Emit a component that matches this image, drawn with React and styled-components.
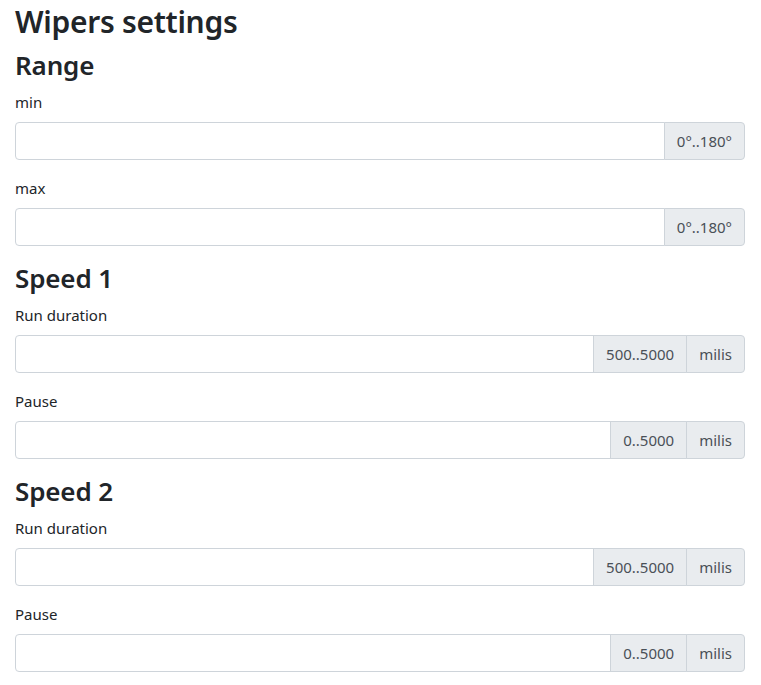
import React from "react";
import styled, { createGlobalStyle } from "styled-components";

const GlobalStyle = createGlobalStyle`
  * {
    box-sizing: border-box;
  }

  body {
    margin: 0;
    background: #fff;
    color: #212529;
    font-family: "Noto Sans", "Open Sans", Arial, sans-serif;
    font-size: 16px;
    line-height: 1.5;
  }
`;

const Page = styled.div`
  padding: 2px 16px 0 15px;
`;

const Title = styled.h2`
  margin: 0 0 8px;
  font-size: 30px;
  font-weight: 600;
  line-height: 39px;
  letter-spacing: -0.3px;
`;

const SectionTitle = styled.h3`
  margin: 0 0 8px;
  font-size: 26px;
  font-weight: 600;
  line-height: 33px;
  letter-spacing: -0.15px;
`;

const FormGroup = styled.div`
  margin-bottom: 16px;
`;

const Label = styled.label`
  display: inline-block;
  margin-bottom: 8px;
  font-size: 15px;
  line-height: 24px;
`;

const InputGroup = styled.div`
  display: flex;
  align-items: stretch;
  width: 100%;
`;

const Input = styled.input`
  flex: 1 1 auto;
  min-width: 0;
  height: 38px;
  padding: 6px 12px;
  font: inherit;
  color: #495057;
  background: #fff;
  border: 1px solid #ced4da;
  border-radius: 4px 0 0 4px;
  outline: none;
`;

const Addon = styled.span`
  display: flex;
  align-items: center;
  padding: 6px 12px;
  margin-left: -1px;
  font-size: 15px;
  color: #495057;
  white-space: nowrap;
  background: #e9ecef;
  border: 1px solid #ced4da;
  border-radius: ${(p) => (p.$last ? "0 4px 4px 0" : "0")};
`;

const sections = [
  {
    title: "Range",
    fields: [
      { label: "min", addons: ["0°..180°"] },
      { label: "max", addons: ["0°..180°"] },
    ],
  },
  {
    title: "Speed 1",
    fields: [
      { label: "Run duration", addons: ["500..5000", "milis"] },
      { label: "Pause", addons: ["0..5000", "milis"] },
    ],
  },
  {
    title: "Speed 2",
    fields: [
      { label: "Run duration", addons: ["500..5000", "milis"] },
      { label: "Pause", addons: ["0..5000", "milis"] },
    ],
  },
];

function Field({ label, addons }) {
  return (
    <FormGroup>
      <Label>{label}</Label>
      <InputGroup>
        <Input type="text" />
        {addons.map((a, i) => (
          <Addon key={i} $last={i === addons.length - 1}>
            {a}
          </Addon>
        ))}
      </InputGroup>
    </FormGroup>
  );
}

export default function App() {
  return (
    <>
      <GlobalStyle />
      <Page>
        <Title>Wipers settings</Title>
        {sections.map((s) => (
          <div key={s.title}>
            <SectionTitle>{s.title}</SectionTitle>
            {s.fields.map((f, i) => (
              <Field key={i} {...f} />
            ))}
          </div>
        ))}
      </Page>
    </>
  );
}
